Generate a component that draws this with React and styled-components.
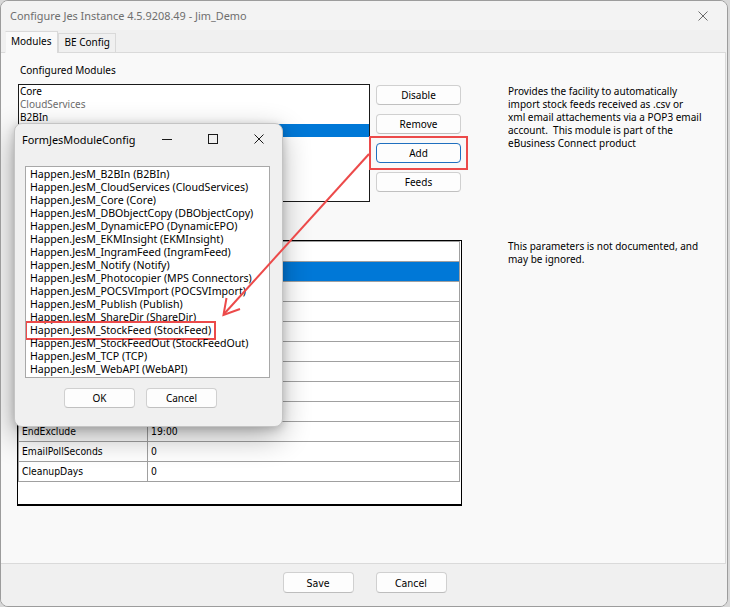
import React from 'react'
import styled, { createGlobalStyle } from 'styled-components'

const ui = `"Noto Sans", "Open Sans", sans-serif`
const classic = `"DejaVu Sans Condensed", "DejaVu Sans", sans-serif`

const GlobalStyle = createGlobalStyle`
  html, body {
    margin: 0;
    padding: 0;
    background: #d8d8d8;
  }
  body {
    font-family: ${ui};
    font-size: 10px;
    color: #000;
  }
  * { box-sizing: border-box; }
`

// rows that sit under the dialog are left without text
const configured = [
    { name: 'Core' },
    { name: 'CloudServices', muted: true },
    { name: 'B2BIn' },
    { name: '', selected: true },
    { name: '' },
    { name: '' },
]

const actions = ['Disable', 'Remove', 'Add', 'Feeds']

const parameters = [
    { name: '', value: '' },
    { name: '', value: '', selected: true },
    { name: '', value: '' },
    { name: '', value: '' },
    { name: '', value: '' },
    { name: '', value: '' },
    { name: '', value: '' },
    { name: '', value: '' },
    { name: '', value: '' },
    { name: 'EndExclude', value: '19:00' },
    { name: 'EmailPollSeconds', value: '0' },
    { name: 'CleanupDays', value: '0' },
]

const available = [
    'Happen.JesM_B2BIn (B2BIn)',
    'Happen.JesM_CloudServices (CloudServices)',
    'Happen.JesM_Core (Core)',
    'Happen.JesM_DBObjectCopy (DBObjectCopy)',
    'Happen.JesM_DynamicEPO (DynamicEPO)',
    'Happen.JesM_EKMInsight (EKMInsight)',
    'Happen.JesM_IngramFeed (IngramFeed)',
    'Happen.JesM_Notify (Notify)',
    'Happen.JesM_Photocopier (MPS Connectors)',
    'Happen.JesM_POCSVImport (POCSVImport)',
    'Happen.JesM_Publish (Publish)',
    'Happen.JesM_ShareDir (ShareDir)',
    'Happen.JesM_StockFeed (StockFeed)',
    'Happen.JesM_StockFeedOut (StockFeedOut)',
    'Happen.JesM_TCP (TCP)',
    'Happen.JesM_WebAPI (WebAPI)',
]

function App() {
    return (
        <>
            <GlobalStyle />
            <Window>
                <TitleBar>
                    <TitleText>Configure Jes Instance 4.5.9208.49 - Jim_Demo</TitleText>
                    <CloseButton>
                        <svg width="10" height="10" viewBox="0 0 10 10">
                            <path d="M0.5 0.5 L9.5 9.5 M9.5 0.5 L0.5 9.5" stroke="#6a6a6a" strokeWidth="1" />
                        </svg>
                    </CloseButton>
                </TitleBar>

                <TabStrip>
                    <Tab $active>Modules</Tab>
                    <Tab>BE Config</Tab>
                </TabStrip>

                <TabPage>
                    <FieldLabel>Configured Modules</FieldLabel>
                    <TopRow>
                        <LeftBlock>
                            <ListBox>
                                {configured.map((m, i) => (
                                    <ListItem key={i} $muted={m.muted} $selected={m.selected}>
                                        {m.name}
                                    </ListItem>
                                ))}
                            </ListBox>
                            <ButtonCol>
                                {actions.map((a) => (
                                    <Button key={a} $focused={a === 'Add'}>{a}</Button>
                                ))}
                            </ButtonCol>
                        </LeftBlock>
                        <Note $top={1}>
                            Provides the facility to automatically<br />
                            import stock feeds received as .csv or<br />
                            xml email attachements via a POP3 email<br />
                            account.&nbsp; This module is part of the<br />
                            eBusiness Connect product
                        </Note>
                    </TopRow>

                    <BottomRow>
                        <Grid>
                            {parameters.map((p, i) => (
                                <GridRow key={i} $selected={p.selected}>
                                    <NameCell>{p.name}</NameCell>
                                    <ValueCell>{p.value}</ValueCell>
                                </GridRow>
                            ))}
                        </Grid>
                        <Note $top={0}>
                            This parameters is not documented, and<br />
                            may be ignored.
                        </Note>
                    </BottomRow>
                </TabPage>

                <Footer>
                    <FooterButton>Save</FooterButton>
                    <FooterButton>Cancel</FooterButton>
                </Footer>

                <Dialog>
                    <DialogTitleBar>
                        <DialogTitle>FormJesModuleConfig</DialogTitle>
                        <Captions>
                            <CaptionButton>
                                <svg width="10" height="10" viewBox="0 0 10 10">
                                    <path d="M0 5.5 H10" stroke="#1a1a1a" strokeWidth="1" />
                                </svg>
                            </CaptionButton>
                            <CaptionButton>
                                <svg width="10" height="10" viewBox="0 0 10 10">
                                    <rect x="0.5" y="0.5" width="9" height="9" fill="none" stroke="#1a1a1a" strokeWidth="1" />
                                </svg>
                            </CaptionButton>
                            <CaptionButton>
                                <svg width="10" height="10" viewBox="0 0 10 10">
                                    <path d="M0.5 0.5 L9.5 9.5 M9.5 0.5 L0.5 9.5" stroke="#1a1a1a" strokeWidth="1" />
                                </svg>
                            </CaptionButton>
                        </Captions>
                    </DialogTitleBar>
                    <DialogBody>
                        <PickList>
                            {available.map((item) => (
                                <PickItem key={item}>
                                    <PickText $marked={item.includes('(StockFeed)')}>{item}</PickText>
                                </PickItem>
                            ))}
                        </PickList>
                        <DialogButtons>
                            <Button $wide>OK</Button>
                            <Button $wide>Cancel</Button>
                        </DialogButtons>
                    </DialogBody>
                </Dialog>

                <Annotation width="730" height="607" viewBox="0 0 730 607">
                    <path d="M369 154 L224 314" stroke="#ec4a4a" strokeWidth="2" fill="none" />
                    <path d="M240 309 L223.5 315 L226.5 298" stroke="#ec4a4a" strokeWidth="2" fill="none" strokeLinejoin="miter" />
                </Annotation>
            </Window>
        </>
    )
}

export default App

const Window = styled.div`
    position: relative;
    width: 728px;
    height: 607px;
    border: 1px solid #9c9c9c;
    border-radius: 8px;
    overflow: hidden;
    display: flex;
    flex-direction: column;
    background: #f0f0f0;
`

const TitleBar = styled.div`
    height: 29px;
    flex: 0 0 29px;
    display: flex;
    align-items: center;
    justify-content: space-between;
    padding-left: 9px;
    background: #f3f3f3;
`

const TitleText = styled.div`
    font-size: 10.9px;
    color: #6e6e6e;
`

const CloseButton = styled.div`
    width: 46px;
    height: 29px;
    display: flex;
    align-items: center;
    justify-content: center;
    margin-right: 1px;
`

const TabStrip = styled.div`
    height: 22px;
    flex: 0 0 22px;
    display: flex;
    align-items: flex-end;
    padding-left: 4px;
    background: #f0f0f0;
`

const Tab = styled.div`
    height: ${(p) => (p.$active ? '22px' : '19px')};
    padding: ${(p) => (p.$active ? '3px 6px 0 5px' : '2px 5px 0 5px')};
    background: ${(p) => (p.$active ? '#f9f9f9' : '#f0f0f0')};
    border: 1px solid #d9d9d9;
    border-bottom: none;
    border-left-color: ${(p) => (p.$active ? '#f0f0f0' : '#d9d9d9')};
    margin-bottom: ${(p) => (p.$active ? '-1px' : '0')};
    position: relative;
    z-index: ${(p) => (p.$active ? 1 : 0)};
    line-height: 13px;
    white-space: nowrap;
`

const TabPage = styled.div`
    flex: 0 0 512px;
    margin: 0 1px 0 0;
    background: #f9f9f9;
    border: 1px solid #dadada;
    border-left: none;
    padding: 0 0 0 16px;
`

const FieldLabel = styled.div`
    margin: 11px 0 0 3px;
    line-height: 13px;
`

const TopRow = styled.div`
    display: flex;
    align-items: flex-start;
    margin-top: 7px;
`

const LeftBlock = styled.div`
    width: 445px;
    display: flex;
    gap: 6px;
    flex: 0 0 445px;
`

const ListBox = styled.div`
    width: 352px;
    height: 118px;
    margin-left: 1px;
    border: 1px solid #1a1a1a;
    background: #fff;
    overflow: hidden;
`

const ListItem = styled.div`
    height: 13px;
    line-height: 13px;
    padding-left: 1px;
    white-space: nowrap;
    color: ${(p) => (p.$selected ? '#fff' : p.$muted ? '#6d6d6d' : '#000')};
    background: ${(p) => (p.$selected ? '#0078d7' : 'transparent')};
`

const ButtonCol = styled.div`
    display: flex;
    flex-direction: column;
    gap: 9px;
    margin-top: 1px;
`

const Button = styled.div`
    position: relative;
    width: ${(p) => (p.$wide ? '71px' : '85px')};
    height: 20px;
    display: flex;
    align-items: center;
    justify-content: center;
    background: #fdfdfd;
    border: 1px solid ${(p) => (p.$focused ? '#1f6fbf' : '#d0d0d0')};
    border-bottom-color: ${(p) => (p.$focused ? '#1f6fbf' : '#c0c0c0')};
    border-radius: 4px;
    line-height: 13px;
    &::after {
        content: '';
        display: ${(p) => (p.$focused ? 'block' : 'none')};
        position: absolute;
        inset: -8px;
        border: 2px solid #ec4a4a;
    }
`

const Note = styled.div`
    margin-left: 46px;
    padding-top: ${(p) => p.$top}px;
    line-height: 13px;
    white-space: nowrap;
`

const BottomRow = styled.div`
    display: flex;
    align-items: flex-start;
    margin-top: 38px;
`

const Grid = styled.div`
    flex: 0 0 445px;
    width: 445px;
    height: 266px;
    border: 1px solid #000;
    border-bottom-width: 2px;
    background: #fff;
    padding-right: 1px;
    font-family: ${classic};
    font-size: 10.3px;
    &::before {
        content: '';
        display: block;
        border-top: 1px solid #a0a0a0;
        border-right: 1px solid #a0a0a0;
    }
`

const GridRow = styled.div`
    display: grid;
    grid-template-columns: 130px 1fr;
    height: 20px;
    border-bottom: 1px solid #a0a0a0;
    border-right: 1px solid #a0a0a0;
    background: ${(p) => (p.$selected ? '#0078d7' : '#fff')};
    color: ${(p) => (p.$selected ? '#fff' : '#000')};
`

const NameCell = styled.div`
    padding-left: 3px;
    line-height: 19px;
    border-left: 1px solid #a0a0a0;
    border-right: 1px solid #a0a0a0;
    white-space: nowrap;
`

const ValueCell = styled.div`
    padding-left: 3px;
    line-height: 19px;
    white-space: nowrap;
`

const Footer = styled.div`
    flex: 1;
    display: flex;
    justify-content: center;
    align-items: flex-start;
    gap: 22px;
    padding: 8px 0 0 1px;
    background: #f0f0f0;
`

const FooterButton = styled.div`
    width: 71px;
    height: 21px;
    display: flex;
    align-items: center;
    justify-content: center;
    background: #fdfdfd;
    border: 1px solid #d0d0d0;
    border-bottom-color: #bdbdbd;
    border-radius: 4px;
    font-family: ${classic};
    font-size: 10.5px;
`

const Dialog = styled.div`
    position: absolute;
    left: 13px;
    top: 122px;
    width: 269px;
    height: 304px;
    background: #f0f0f0;
    border: 1px solid #c4c4c4;
    border-radius: 8px;
    box-shadow: -2px 10px 30px rgba(0, 0, 0, 0.32), 0 2px 8px rgba(0, 0, 0, 0.18);
    z-index: 5;
`

const DialogTitleBar = styled.div`
    height: 30px;
    display: flex;
    align-items: center;
    justify-content: space-between;
    padding-left: 7px;
`

const DialogTitle = styled.div`
    font-size: 10.9px;
`

const Captions = styled.div`
    display: flex;
    height: 30px;
`

const CaptionButton = styled.div`
    width: 46px;
    height: 30px;
    display: flex;
    align-items: center;
    justify-content: center;
`

const DialogBody = styled.div`
    padding: 12px 0 0 10px;
`

const PickList = styled.div`
    width: 245px;
    height: 212px;
    border: 1px solid #a8a8a8;
    background: #fff;
    padding-top: 1px;
    overflow: hidden;
    font-size: 10.6px;
`

const PickItem = styled.div`
    height: 13px;
    line-height: 13px;
    padding-left: 3px;
    white-space: nowrap;
`

const PickText = styled.span`
    display: inline-block;
    padding: 0 2px;
    margin-left: -1px;
    outline: ${(p) => (p.$marked ? '2px solid #ec4a4a' : 'none')};
    outline-offset: 1px;
`

const DialogButtons = styled.div`
    display: flex;
    gap: 11px;
    margin: 10px 0 0 39px;
`

const Annotation = styled.svg`
    position: absolute;
    left: -1px;
    top: -1px;
    pointer-events: none;
    z-index: 10;
`
